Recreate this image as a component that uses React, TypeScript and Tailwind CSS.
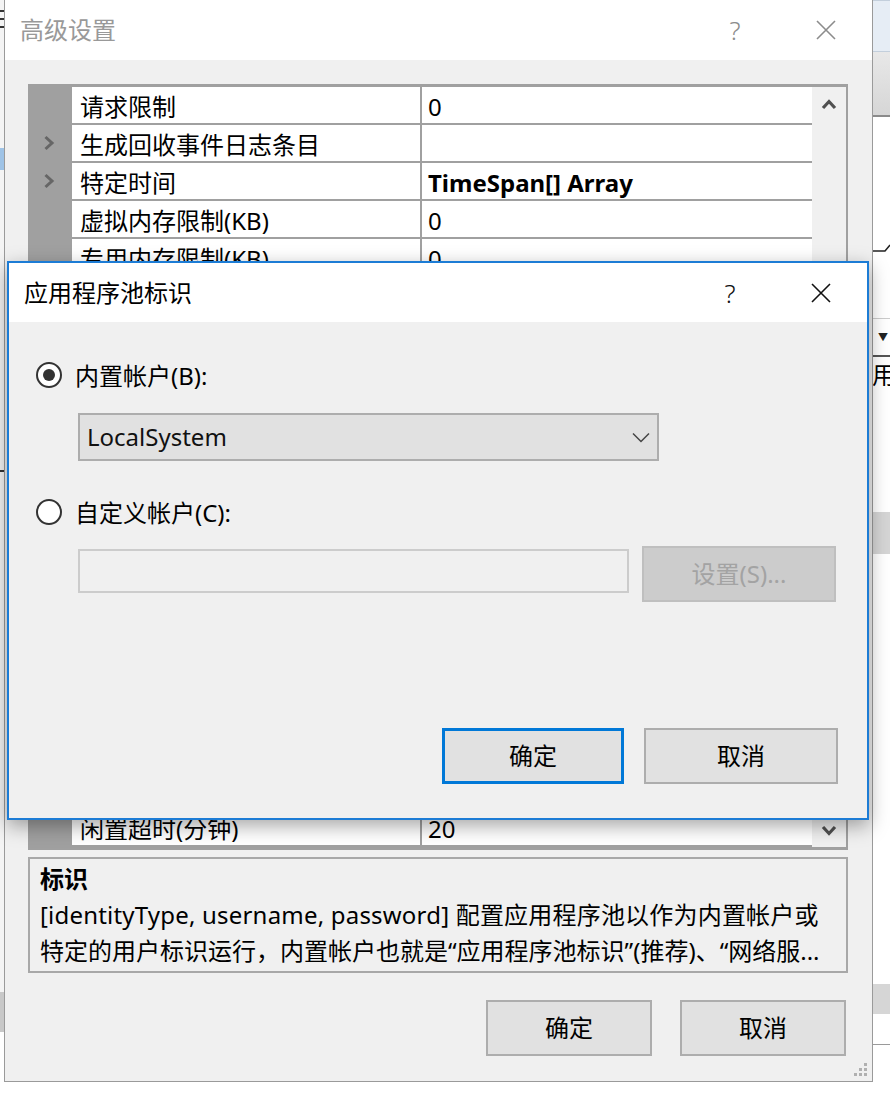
import React from 'react';

type Row = { name: string; value: string; expand?: boolean; bold?: boolean };

// rows 6..19 sit under the identity dialog, so they are left blank
const rows: Row[] = [
  { name: '请求限制', value: '0' },
  { name: '生成回收事件日志条目', value: '', expand: true },
  { name: '特定时间', value: 'TimeSpan[] Array', expand: true, bold: true },
  { name: '虚拟内存限制(KB)', value: '0' },
  { name: '专用内存限制(KB)', value: '0' },
  ...Array.from({ length: 14 }, () => ({ name: '', value: '' })),
  { name: '闲置超时(分钟)', value: '20' },
];

function CloseIcon({ color }: { color: string }) {
  return (
    <svg width="20" height="20" viewBox="0 0 20 20">
      <path d="M1 1 L19 19 M19 1 L1 19" stroke={color} strokeWidth="1.6" fill="none" />
    </svg>
  );
}

function TitleButtons({ color }: { color: string }) {
  return (
    <div className="ml-auto flex items-center gap-[48px] pr-[23px]">
      <span className="w-[40px] text-center text-[26px] font-light leading-none" style={{ color }}>
        ?
      </span>
      <span className="flex w-[46px] justify-center">
        <CloseIcon color={color} />
      </span>
    </div>
  );
}

function Radio({ checked }: { checked?: boolean }) {
  return (
    <span className="flex h-[26px] w-[26px] shrink-0 items-center justify-center rounded-full border-2 border-[#333333] bg-white">
      {checked && <span className="h-[12px] w-[12px] rounded-full bg-[#333333]" />}
    </span>
  );
}

function PropertyGrid() {
  return (
    <div className="flex h-[766px] border-x-2 border-y-[3px] border-[#a0a0a0]">
      <div className="flex w-[782px] flex-col bg-[#a0a0a0]">
        {rows.map((r, i) => (
          <div key={i} className="flex h-[38px] shrink-0 pb-[2px]">
            <div className="flex w-[42px] items-center pl-[13px]">
              {r.expand && (
                <svg width="12" height="16" viewBox="0 0 12 16">
                  <path d="M2.5 2 L9 8 L2.5 14" stroke="#666666" strokeWidth="3" fill="none" />
                </svg>
              )}
            </div>
            <div className="flex w-[348px] items-center bg-white pl-[8px] pt-[3px] text-[24px] leading-none whitespace-nowrap">
              {r.name}
            </div>
            <div
              className={`ml-[2px] flex w-[390px] items-center bg-white pl-[6px] pt-[3px] text-[24px] leading-none whitespace-nowrap ${
                r.bold ? 'font-bold' : ''
              }`}
            >
              {r.value}
            </div>
          </div>
        ))}
      </div>
      <div className="flex w-[34px] flex-col items-center justify-between bg-[#f0f0f0] pt-[11px] pb-[10px]">
        <svg width="16" height="12" viewBox="0 0 16 12">
          <path d="M2 10 L8 3.5 L14 10" stroke="#505050" strokeWidth="3.2" fill="none" />
        </svg>
        <svg width="16" height="12" viewBox="0 0 16 12">
          <path d="M2 2 L8 8.5 L14 2" stroke="#505050" strokeWidth="3.2" fill="none" />
        </svg>
      </div>
    </div>
  );
}

function OuterDialog() {
  return (
    <div className="relative flex h-[1082px] w-[869px] shrink-0 flex-col border-x border-b border-[#9a9a9a] bg-[#f0f0f0]">
      <div className="flex h-[60px] shrink-0 items-center bg-white pl-[15px]">
        <span className="text-[24px] leading-none text-[#999999]">高级设置</span>
        <TitleButtons color="#8c8c8c" />
      </div>
      <div className="flex flex-1 flex-col pt-[24px] pl-[23px] pr-[24px]">
        <PropertyGrid />
        <div className="mt-[7px] h-[116px] border-2 border-[#a8a8a8] px-[10px] pt-[2px] text-[24px] leading-[36px] whitespace-nowrap">
          <div className="font-bold">标识</div>
          <div className="tracking-[0.2px]">[identityType, username, password] 配置应用程序池以作为内置帐户或</div>
          <div>特定的用户标识运行，内置帐户也就是“应用程序池标识”(推荐)、“网络服...</div>
        </div>
        <div className="mt-[27px] flex justify-end gap-[28px] pr-[2px]">
          <button className="h-[56px] w-[166px] border-2 border-[#adadad] bg-[#e1e1e1] text-[24px] leading-none">确定</button>
          <button className="h-[56px] w-[166px] border-2 border-[#adadad] bg-[#e1e1e1] text-[24px] leading-none">取消</button>
        </div>
      </div>
      {/* resize grip */}
      <svg className="absolute right-[4px] bottom-[4px]" width="16" height="16" viewBox="0 0 16 16">
        <g fill="#b0b0b0">
          <rect x="12" y="2" width="3" height="3" />
          <rect x="7" y="7" width="3" height="3" />
          <rect x="12" y="7" width="3" height="3" />
          <rect x="2" y="12" width="3" height="3" />
          <rect x="7" y="12" width="3" height="3" />
          <rect x="12" y="12" width="3" height="3" />
        </g>
      </svg>
    </div>
  );
}

function InnerDialog() {
  return (
    <div className="absolute top-[261px] left-[7px] flex h-[559px] w-[862px] flex-col border-2 border-[#1c7cd5] bg-[#f0f0f0] shadow-[0_6px_18px_rgba(0,0,0,0.35)]">
      <div className="flex h-[59px] shrink-0 items-center bg-white pl-[15px]">
        <span className="text-[24px] leading-none text-black">应用程序池标识</span>
        <TitleButtons color="#111111" />
      </div>
      <div className="flex flex-1 flex-col pt-[40px] pr-[29px] pb-[34px] pl-[27px] text-[24px] leading-none">
        <div className="flex h-[26px] items-center gap-[13px]">
          <Radio checked />
          <span className="pt-[2px]">内置帐户(B):</span>
        </div>
        <div className="mt-[25px] ml-[42px] flex h-[48px] w-[581px] items-center border-2 border-[#adadad] bg-[#e1e1e1] pr-[7px] pl-[7px]">
          <span className="text-[#111111]">LocalSystem</span>
          <svg className="ml-auto" width="18" height="11" viewBox="0 0 18 11">
            <path d="M1 1.5 L9 9.5 L17 1.5" stroke="#444444" strokeWidth="1.5" fill="none" />
          </svg>
        </div>
        <div className="mt-[38px] flex h-[26px] items-center gap-[13px]">
          <Radio />
          <span className="pt-[2px]">自定义帐户(C):</span>
        </div>
        <div className="mt-[21px] ml-[42px] flex gap-[13px]">
          <div className="mt-[3px] h-[44px] w-[551px] border-2 border-[#cccccc] bg-[#f0f0f0]" />
          <button className="h-[56px] w-[194px] border-2 border-[#bfbfbf] bg-[#cccccc] text-[#a3a3a3]">设置(S)...</button>
        </div>
        <div className="flex-1" />
        <div className="flex justify-end gap-[20px]">
          <button className="h-[56px] w-[182px] border-[3px] border-[#0078d7] bg-[#e1e1e1]">确定</button>
          <button className="h-[56px] w-[194px] border-2 border-[#adadad] bg-[#e1e1e1]">取消</button>
        </div>
      </div>
    </div>
  );
}

function RightStrip() {
  return (
    <div className="flex flex-1 flex-col overflow-hidden bg-white">
      <div className="h-[52px] shrink-0 border-y border-[#c3cfdc] bg-[#e6edf5]" />
      <div className="h-[63px] shrink-0 bg-gradient-to-b from-[#e8e8e8] to-[#d6d6d6]" />
      <div className="h-[2px] shrink-0 bg-[#8a8a8a]" />
      <div className="h-[125px] shrink-0" />
      <svg className="shrink-0" width="17" height="10" viewBox="0 0 17 10">
        <path d="M0 9 L12 9 L17 3" stroke="#222222" strokeWidth="1.5" fill="none" />
      </svg>
      <div className="h-[66px] shrink-0" />
      <div className="h-[1px] shrink-0 bg-[#cccccc]" />
      <div className="flex h-[36px] shrink-0 items-center justify-end pr-[2px] text-[10px] leading-none text-[#222222]">▼</div>
      <div className="h-[2px] shrink-0 bg-[#555555]" />
      <div className="h-[6px] shrink-0" />
      <div className="-ml-[1px] h-[28px] shrink-0 text-[24px] leading-none text-black">用</div>
      <div className="h-[121px] shrink-0" />
      <div className="h-[42px] shrink-0 bg-[#d5d5d5]" />
      <div className="h-[430px] shrink-0" />
      <div className="h-[30px] shrink-0 bg-[#d6d6d6]" />
      <div className="h-[30px] shrink-0" />
      <div className="h-[1px] shrink-0 bg-[#9a9a9a]" />
    </div>
  );
}

function LeftStrip() {
  return (
    <div className="flex w-[4px] shrink-0 flex-col bg-[#f4f4f4]">
      <div className="mt-[10px] h-[2px] bg-[#333333]" />
      <div className="mt-[6px] h-[2px] bg-[#333333]" />
      <div className="mt-[6px] h-[2px] bg-[#333333]" />
      <div className="mt-[120px] h-[22px] bg-[#9fc3e6]" />
      <div className="mt-[300px] h-[2px] bg-[#333333]" />
      <div className="mt-[520px] h-[40px] bg-[#c8c8c8]" />
    </div>
  );
}

export default function App() {
  return (
    <div className="relative flex h-[1095px] w-[890px] items-start overflow-hidden bg-white font-['Noto_Sans','Noto_Sans_CJK_SC',sans-serif] text-black">
      <LeftStrip />
      <OuterDialog />
      <RightStrip />
      <InnerDialog />
    </div>
  );
}
